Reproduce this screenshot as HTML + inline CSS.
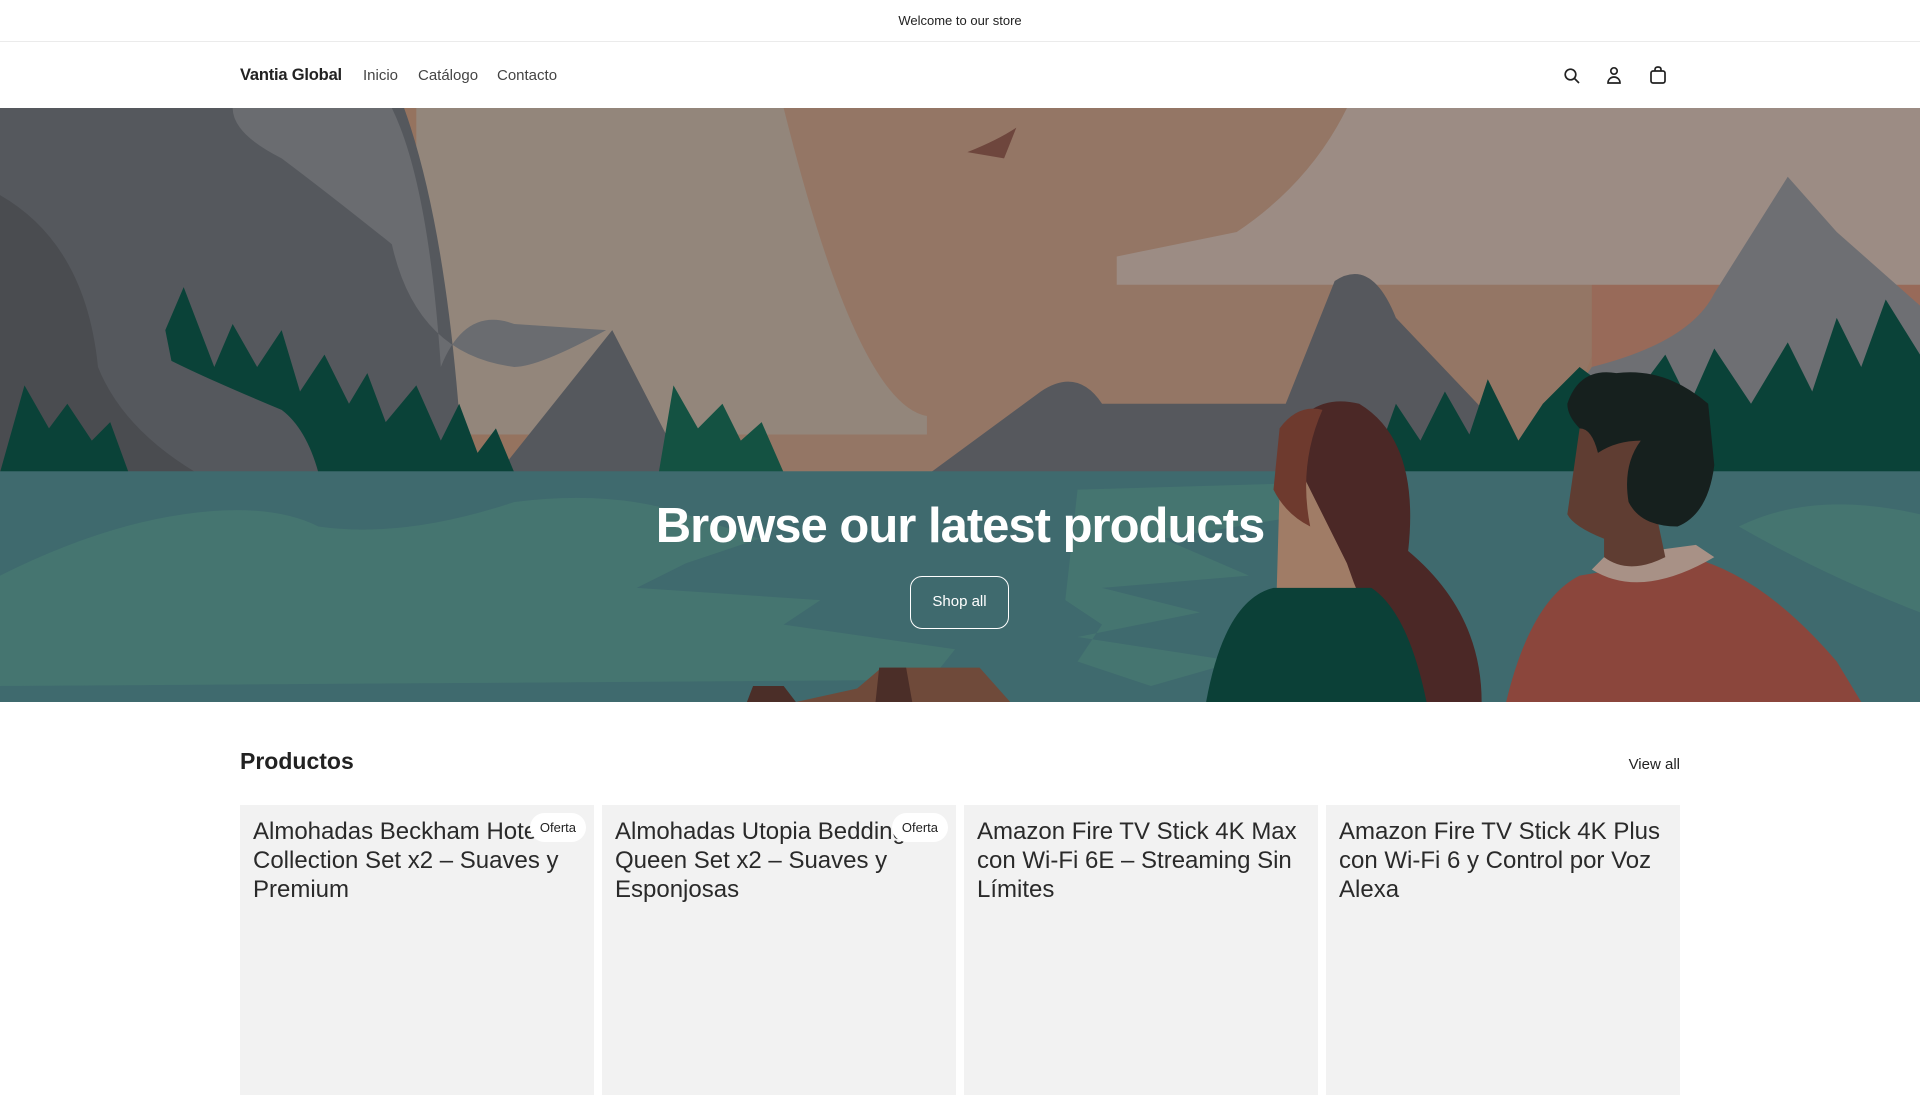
<!DOCTYPE html>
<html><head><meta charset="utf-8"><style>
*{margin:0;padding:0;box-sizing:border-box}
body{width:1920px;height:1080px;overflow:hidden;background:#fff;font-family:"Liberation Sans",Arial,sans-serif;color:#222}
.top{height:42px;border-bottom:1px solid #ebebeb;text-align:center;font-size:13px;line-height:42px;color:#222}
.hdr{height:66px;position:relative}
.brand{position:absolute;left:240px;top:24px;font-weight:bold;font-size:16.5px;color:#222;letter-spacing:-0.2px}
.nav{position:absolute;top:25px;font-size:15px;color:#444}
.hero{position:absolute;left:0;top:108px;width:1920px;height:594px;overflow:hidden}
.hero h1{position:absolute;left:0;width:1920px;top:390px;text-align:center;color:#fff;font-size:49px;font-weight:bold;letter-spacing:-1px}
.btn{position:absolute;left:910px;top:468px;width:99px;height:53px;border:1.5px solid #fff;border-radius:12px;color:#fff;font-size:15px;text-align:center;line-height:50px}
.ph{position:absolute;left:240px;top:748px;font-size:23px;font-weight:bold;color:#222}
.va{position:absolute;right:240px;top:756px;font-size:15px;color:#222}
.card{position:absolute;top:805px;width:354px;height:290px;background:#f2f2f2;padding:12px 13px;font-size:24px;line-height:29px;color:#2a2a2a}
.badge{position:absolute;top:8px;right:8px;background:#fff;border-radius:15px;font-size:13px;padding:0 10px;height:29px;line-height:29px;color:#222}
</style></head><body>
<div class="top">Welcome to our store</div>
<div class="hdr">
<div class="brand">Vantia Global</div>
<div class="nav" style="left:363px">Inicio</div>
<div class="nav" style="left:418px">Catálogo</div>
<div class="nav" style="left:497px">Contacto</div>
</div>
<svg style="position:absolute;left:1563px;top:67px" width="18" height="18" viewBox="0 0 18 18" fill="none" stroke="#222" stroke-width="1.7"><circle cx="7.5" cy="7.5" r="5.3"/><path d="M11.5 11.5l4.5 4.5"/></svg>
<svg style="position:absolute;left:1605px;top:66px" width="18" height="19" viewBox="0 0 18 19" fill="none" stroke="#222" stroke-width="1.7"><circle cx="9" cy="5" r="3.2"/><path d="M3 17h12c0-3.5-2.7-6-6-6s-6 2.5-6 6z"/></svg>
<svg style="position:absolute;left:1648px;top:65px" width="20" height="20" viewBox="0 0 20 20" fill="none" stroke="#222" stroke-width="1.7"><rect x="3" y="6" width="14" height="12" rx="2"/><path d="M7 6V4.5C7 3 8 2 10 2s3 1 3 2.5V6"/></svg>
<div class="hero">
<svg width="1920" height="594" viewBox="0 89 1568 484" preserveAspectRatio="none">
<rect x="0" y="89" width="1568" height="484" fill="#95735f"/>
<path d="M600 89 L1300 89 L1320 240 L1250 420 L580 420 Z" fill="#947665"/>
<path d="M1300 89 L1568 89 L1568 300 L1480 300 L1300 420 Z" fill="#986a59"/>
<path d="M340 89 L640 89 Q700 330 757 340 L757 355 L340 355 Z" fill="#93867b"/>
<path d="M912 210 L1010 190 Q1070 150 1100 89 L1568 89 L1568 233 L912 233 Z" fill="#9c8c84"/>
<path d="M790 125 Q815 115 830 105 L820 130 Z" fill="#6e463d"/>
<path d="M0 89 L330 89 Q370 200 380 420 L500 270 L560 386 L0 386 Z" fill="#55585d"/>
<path d="M190 89 L320 89 Q350 150 360 300 Q380 250 420 265 L495 270 Q440 300 420 300 Q340 290 320 200 Q270 160 230 130 Q190 110 190 89Z" fill="#6a6c70"/>
<path d="M0 160 Q70 200 80 300 Q100 350 160 386 L0 386 Z" fill="#4a4c50"/>
<path d="M135 270 L150 235 L175 300 L190 265 L210 300 L230 270 L245 320 L265 290 L285 330 L300 305 L315 345 L340 315 L360 360 L375 330 L390 370 L405 350 L420 386 L260 386 Q250 350 230 335 Q170 310 140 295Z" fill="#0a4238"/>
<path d="M0 386 L20 315 L40 350 L55 330 L75 360 L90 345 L105 386 Z" fill="#0a4238"/>
<path d="M538 386 L550 315 L570 350 L590 330 L605 360 L622 345 L640 386 Z" fill="#145242"/>
<path d="M760 386 L850 320 Q880 300 900 330 L1050 330 L1090 230 Q1120 210 1140 260 L1260 386 Z" fill="#56585d"/>
<path d="M1240 386 L1300 300 Q1380 280 1400 240 L1460 145 L1500 190 L1568 250 L1568 386 Z" fill="#6e6f73"/>
<path d="M1120 386 L1140 330 L1160 360 L1180 320 L1200 355 L1215 310 L1240 360 L1260 330 L1290 300 L1330 330 L1360 290 L1380 330 L1400 285 L1430 330 L1460 280 L1480 320 L1500 260 L1520 300 L1540 245 L1568 290 L1568 386 Z" fill="#0a4238"/>
<rect x="0" y="385" width="1568" height="190" fill="#3f6a6e"/>
<path d="M0 470 Q80 430 150 420 Q220 410 260 430 Q330 440 420 410 Q500 400 560 420 L620 440 L560 460 L520 480 L670 490 L640 510 L780 530 L760 555 L0 560Z" fill="#457570"/>
<path d="M880 400 L1050 395 L1070 420 L950 440 L1020 470 L900 480 L980 500 L880 520 L1010 540 L940 560 L880 540 L900 510 L870 490 Z" fill="#457570"/>
<path d="M1420 430 Q1480 400 1568 420 L1568 500 Q1490 470 1420 430Z" fill="#457570"/>
<path d="M610 573 L615 560 L640 560 L650 573 Z" fill="#4b2e28"/>
<path d="M650 573 L700 562 L720 545 L800 545 L825 573 Z" fill="#6f4a3a"/>
<path d="M715 573 L718 545 L740 545 L745 573 Z" fill="#4b2e28"/>
<path d="M1040 573 L1045 400 Q1040 340 1090 330 Q1140 340 1150 420 L1150 573Z" fill="#a07c66"/>
<path d="M1050 360 Q1070 320 1110 330 Q1160 360 1150 450 Q1210 500 1210 573 L1160 573 Q1120 520 1100 460 Q1070 400 1050 360Z" fill="#4b2826"/>
<path d="M1045 350 Q1060 330 1080 335 Q1060 380 1070 430 Q1050 420 1040 400Z" fill="#6e3a2e"/>
<path d="M985 573 Q1000 490 1040 480 L1120 480 Q1150 500 1165 573 Z" fill="#0b4037"/>
<path d="M1230 573 Q1250 490 1290 470 L1380 455 Q1440 470 1500 540 L1520 573 Z" fill="#8b463c"/>
<path d="M1300 465 Q1340 490 1400 455 L1385 445 L1310 455Z" fill="#a89186"/>
<path d="M1280 420 L1290 350 Q1320 340 1340 360 L1360 455 Q1330 470 1310 455 L1310 440 Q1285 430 1280 420Z" fill="#5f3d32"/>
<path d="M1280 330 Q1290 300 1320 305 Q1360 300 1395 330 L1400 380 Q1395 420 1370 430 Q1340 430 1330 410 Q1325 380 1340 360 Q1320 360 1305 370 Q1300 350 1290 350 Q1280 340 1280 330Z" fill="#16201e"/>
</svg>
<h1>Browse our latest products</h1>
<div class="btn">Shop all</div>
</div>
<div class="ph">Productos</div>
<div class="va">View all</div>
<div class="card" style="left:240px">Almohadas Beckham Hotel Collection Set x2 – Suaves y Premium<div class="badge">Oferta</div></div>
<div class="card" style="left:602px">Almohadas Utopia Bedding Queen Set x2 – Suaves y Esponjosas<div class="badge">Oferta</div></div>
<div class="card" style="left:964px">Amazon Fire TV Stick 4K Max con Wi-Fi 6E – Streaming Sin Límites</div>
<div class="card" style="left:1326px">Amazon Fire TV Stick 4K Plus con Wi-Fi 6 y Control por Voz Alexa</div>
</body></html>
